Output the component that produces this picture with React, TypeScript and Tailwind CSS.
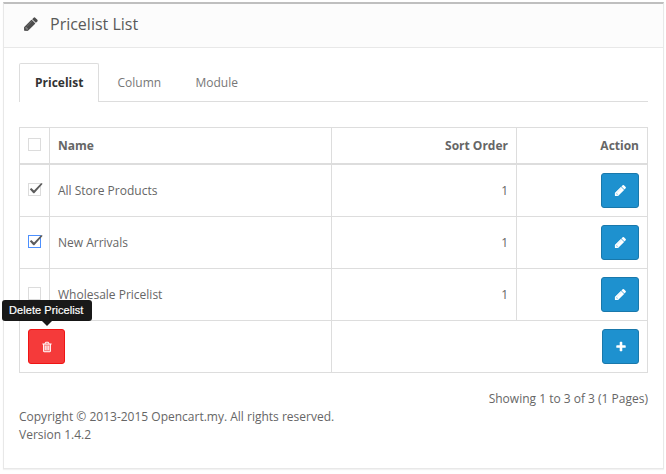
import React from "react";

const PencilIcon = ({ size, className = "" }: { size: number; className?: string }) => (
  <svg width={size} height={size} viewBox="0 0 1792 1792" fill="currentColor" className={className}>
    <path d="M960 416l416 416-832 832h-250l-166-166v-250z" opacity="0.65" />
    <path d="M491 1536l91-91-235-235-91 91v107h128v128h107zm523-928q0-22-22-22-10 0-17 7l-542 542q-7 7-7 17 0 22 22 22 10 0 17-7l542-542q7-7 7-17zm-54-192l416 416-832 832h-416v-416zm683 96q0 53-37 90l-166 166-416-416 166-165q36-38 90-38 53 0 91 38l235 234q37 39 37 91z" />
  </svg>
);

const TrashIcon = () => (
  <svg width="12" height="12" viewBox="0 0 1792 1792" fill="currentColor">
    <path d="M300 460h1190v1140h-1190z" opacity="0.4" />
    <path d="M704 736v576q0 14-9 23t-23 9h-64q-14 0-23-9t-9-23v-576q0-14 9-23t23-9h64q14 0 23 9t9 23zm256 0v576q0 14-9 23t-23 9h-64q-14 0-23-9t-9-23v-576q0-14 9-23t23-9h64q14 0 23 9t9 23zm256 0v576q0 14-9 23t-23 9h-64q-14 0-23-9t-9-23v-576q0-14 9-23t23-9h64q14 0 23 9t9 23zm128 724v-948h-896v948q0 22 7 40.500t14.500 27 10.500 8.500h832q3 0 10.500-8.500t14.500-27 7-40.500zm-672-1076h448l-48-117q-7-9-17-11h-317q-10 2-17 11zm928 32v64q0 14-9 23t-23 9h-96v948q0 83-47 143.500t-113 60.500h-832q-66 0-113-58.500t-47-141.500v-952h-96q-14 0-23-9t-9-23v-64q0-14 9-23t23-9h309l70-167q15-37 54-63t79-26h320q40 0 79 26t54 63l70 167h309q14 0 23 9t9 23z" />
  </svg>
);

const PlusIcon = () => (
  <svg width="12" height="12" viewBox="0 0 1792 1792" fill="currentColor">
    <path d="M1600 736v192q0 40-28 68t-68 28h-416v416q0 40-28 68t-68 28h-192q-40 0-68-28t-28-68v-416h-416q-40 0-68-28t-28-68v-192q0-40 28-68t68-28h416v-416q0-40 28-68t68-28h192q40 0 68 28t28 68v416h416q40 0 68 28t28 68z" />
  </svg>
);

const Checkbox = ({ checked = false, focused = false }: { checked?: boolean; focused?: boolean }) => (
  <span
    role="checkbox"
    aria-checked={checked}
    className={`block size-[13px] border bg-white ${focused ? "border-[#4d90fe]" : "border-[#dcdcdc]"}`}
  >
    {checked && (
      <svg width="15" height="13" viewBox="0 0 15 13" className="-mt-px -ml-px max-w-none" fill="#5c5c5c">
        <path d="M1.800 6.200L3.300 5L6 7.600L13 0.300L14.300 0.300L14.300 1.300L6.300 10.200L5.300 10.200Z" />
      </svg>
    )}
  </span>
);

const cell = "border-r border-b border-[#ddd] px-2";
const blueButton =
  "flex h-[35px] items-center justify-center rounded-[3px] border border-[#1978ab] bg-[#1e91cf] text-white";

const rows = [
  { name: "All Store Products", checked: true, focused: false },
  { name: "New Arrivals", checked: true, focused: true },
  { name: "Wholesale Pricelist", checked: false, focused: false },
];

export default function App() {
  return (
    <div className="h-[474px] w-[666px] overflow-hidden bg-white pt-[2px] pl-[3px] font-['Open_Sans',sans-serif] text-[12px] leading-[18px] text-[#666]">
      <div className="h-[467px] w-[661px] border border-t-2 border-[#e8e8e8] border-t-[#bfbfbf] shadow-[0_1px_1px_rgba(0,0,0,0.05)]">
        <header className="flex h-[44px] items-center border-b border-[#e8e8e8] bg-[#fcfcfc] pb-[3px] pl-[19px]">
          <PencilIcon size={16} className="text-[#4c4c4c]" />
          <h3 className="ml-[11px] text-[16px] leading-[20px] text-[#595959]">Pricelist List</h3>
        </header>
        <div className="px-[15px] pt-[15px]">
          <nav className="flex h-[39px] border-b border-[#ddd]">
            <span className="h-[39px] w-[80px] rounded-t-[2px] border border-b-0 border-[#ddd] bg-white pt-[10px] pl-[15px] font-bold text-[#333]">
              Pricelist
            </span>
            <span className="ml-[18.500px] w-[78px] pt-[11px] text-[#777]">Column</span>
            <span className="pt-[11px] text-[#777]">Module</span>
          </nav>
          <div className="mt-[25px] grid w-[629px] grid-cols-[30px_282px_185px_131px] border-t border-l border-[#ddd]">
            <div className={`${cell} h-[37px] border-b-2 pt-[10px]`}>
              <Checkbox />
            </div>
            <div className={`${cell} border-b-2 pt-[9px] font-bold`}>Name</div>
            <div className={`${cell} border-b-2 pt-[9px] text-right font-bold`}>Sort Order</div>
            <div className={`${cell} border-b-2 pt-[9px] text-right font-bold`}>Action</div>
            {rows.map((row) => (
              <React.Fragment key={row.name}>
                <div className={`${cell} h-[52px] pt-[18px]`}>
                  <Checkbox checked={row.checked} focused={row.focused} />
                </div>
                <div className={`${cell} pt-[17px]`}>{row.name}</div>
                <div className={`${cell} pt-[17px] text-right`}>1</div>
                <div className={`${cell} flex justify-end pt-[8px]`}>
                  <button className={`${blueButton} w-[38px]`}>
                    <PencilIcon size={13} />
                  </button>
                </div>
              </React.Fragment>
            ))}
            <div className={`${cell} col-span-2 h-[52px] pt-[8px]`}>
              <div className="relative w-[37px]">
                <button className="flex h-[35px] w-[37px] items-center justify-center rounded-[3px] border border-[#f01414] bg-[#f53a3a] text-white">
                  <TrashIcon />
                </button>
                <div className="absolute -top-[29px] -left-[26px] h-[21px] w-[90px] rounded-[3px] bg-black/90 pt-px pl-[7px] font-['Liberation_Sans',sans-serif] text-[11px] tracking-[0.070px] whitespace-nowrap text-white [-webkit-text-stroke:0.2px_white]">
                  Delete Pricelist
                  <span className="absolute top-[21px] left-[40px] border-x-[5px] border-t-[5px] border-x-transparent border-t-black/90" />
                </div>
              </div>
            </div>
            <div className={`${cell} col-span-2 flex justify-end pt-[8px]`}>
              <button className={`${blueButton} w-[37px]`}>
                <PlusIcon />
              </button>
            </div>
          </div>
          <p className="mt-[17px] text-right">Showing 1 to 3 of 3 (1 Pages)</p>
          <p>Copyright © 2013-2015 Opencart.my. All rights reserved.</p>
          <p>Version 1.4.2</p>
        </div>
      </div>
    </div>
  );
}
